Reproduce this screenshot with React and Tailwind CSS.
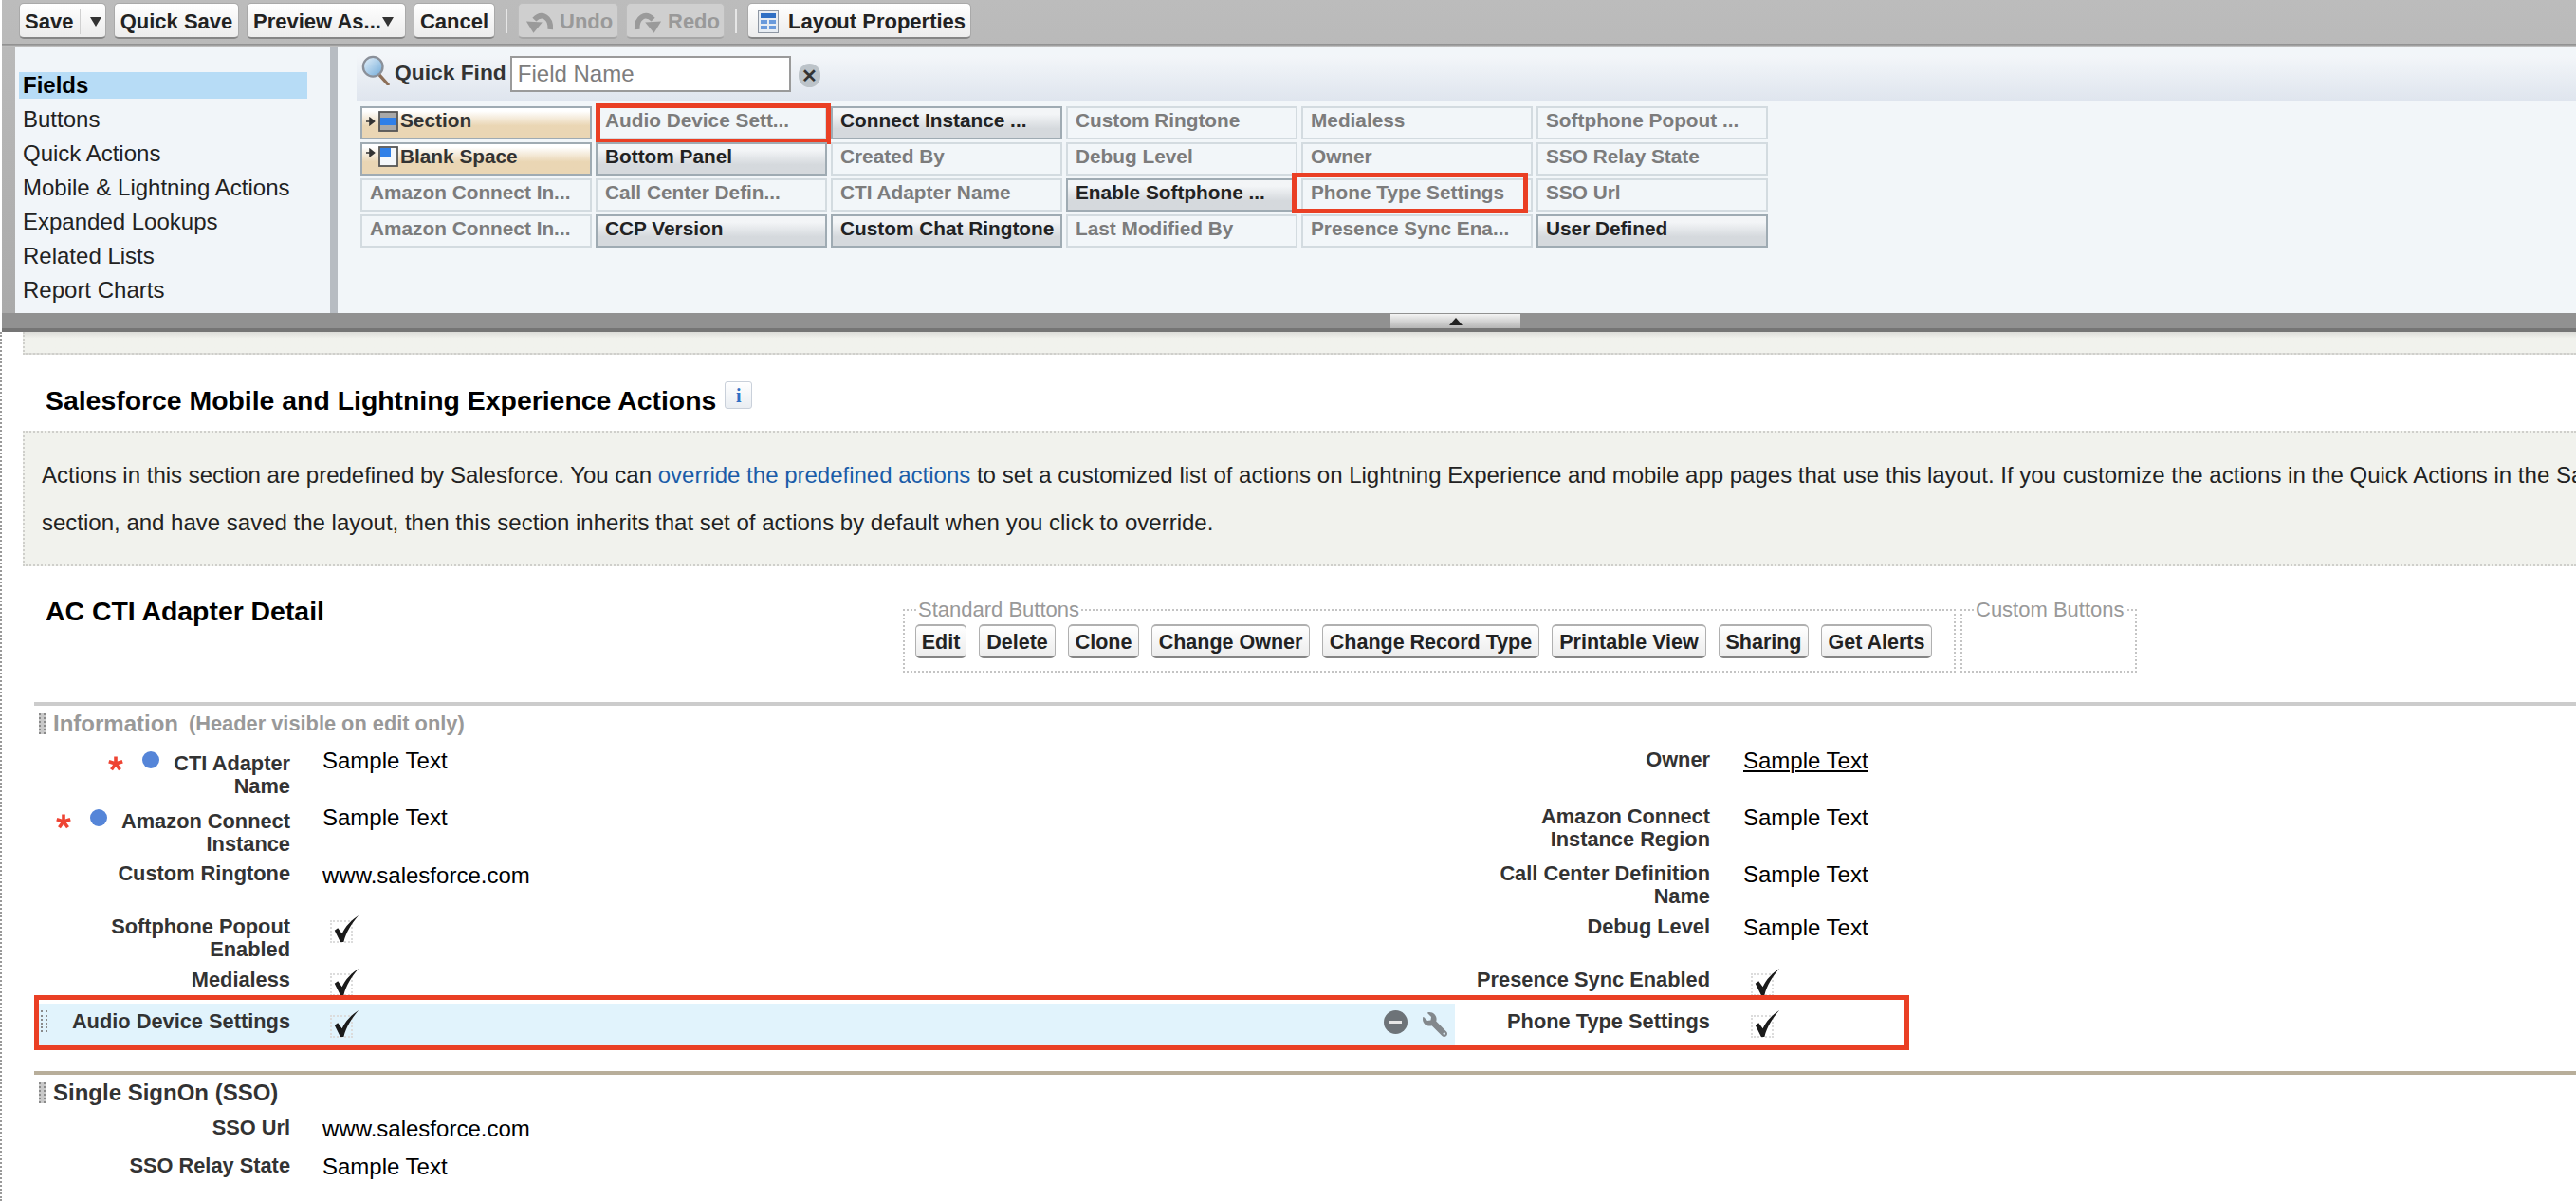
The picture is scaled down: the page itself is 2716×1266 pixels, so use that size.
import React from 'react';
import { FaWrench } from 'react-icons/fa';

const palette = [
  ['Section', 'layout', 'section'],
  ['Audio Device Sett...', 'used', 'red1'],
  ['Connect Instance ...', 'free'],
  ['Custom Ringtone', 'used'],
  ['Medialess', 'used'],
  ['Softphone Popout ...', 'used'],
  ['Blank Space', 'layout', 'blank'],
  ['Bottom Panel', 'free'],
  ['Created By', 'used'],
  ['Debug Level', 'used'],
  ['Owner', 'used'],
  ['SSO Relay State', 'used'],
  ['Amazon Connect In...', 'used'],
  ['Call Center Defin...', 'used'],
  ['CTI Adapter Name', 'used'],
  ['Enable Softphone ...', 'free'],
  ['Phone Type Settings', 'used', 'red2'],
  ['SSO Url', 'used'],
  ['Amazon Connect In...', 'used'],
  ['CCP Version', 'free'],
  ['Custom Chat Ringtone', 'free'],
  ['Last Modified By', 'used'],
  ['Presence Sync Ena...', 'used'],
  ['User Defined', 'free'],
];

const navItems = ['Buttons', 'Quick Actions', 'Mobile & Lightning Actions', 'Expanded Lookups', 'Related Lists', 'Report Charts'];

const stdButtons = [
  ['Edit', 'w-[54px]'],
  ['Delete', 'w-[81px]'],
  ['Clone', 'w-[75px]'],
  ['Change Owner', 'w-[167px]'],
  ['Change Record Type', 'w-[229px]'],
  ['Printable View', 'w-[163px]'],
  ['Sharing', 'w-[95px]'],
  ['Get Alerts', 'w-[117px]'],
];

function Caret({ className }) {
  return <span className={`block shrink-0 w-0 h-0 border-x-[6px] border-x-transparent border-t-[10px] border-t-[#333] ${className}`} />;
}

function ToolButton({ className, children, disabled }) {
  return (
    <div
      className={`h-[38px] flex items-center justify-center rounded-[5px] border border-b-2 pt-[2px] text-[22px] font-bold whitespace-nowrap ${
        disabled
          ? 'bg-[#cfcfcf] border-[#bdbdbd] border-b-[#a6a6a6] text-[#999]'
          : 'bg-gradient-to-b from-white to-[#ececec] border-[#a9a9a9] border-b-[#858585] text-[#222]'
      } ${className}`}
    >
      {children}
    </div>
  );
}

function UndoIcon({ className }) {
  return (
    <svg viewBox="0 0 32 28" className={`w-[30px] h-[27px] shrink-0 ${className}`}>
      <path d="M28 23 C29 10 19 3 10 12" fill="none" stroke="#9a9a9a" strokeWidth="6" />
      <polygon points="1,14 19,15 9,27" fill="#9a9a9a" />
    </svg>
  );
}

function LayoutIcon() {
  return (
    <svg viewBox="0 0 22 24" className="w-[22px] h-[24px] shrink-0">
      <rect x="0.5" y="0.5" width="21" height="23" fill="#e8edf3" stroke="#8e97a3" />
      <rect x="3" y="3" width="16" height="5" fill="#2f6fc4" />
      <rect x="3" y="10" width="7" height="4" fill="#6b9bdc" />
      <rect x="12" y="10" width="7" height="4" fill="#6b9bdc" />
      <rect x="3" y="16" width="7" height="4" fill="#6b9bdc" />
      <rect x="12" y="16" width="7" height="4" fill="#6b9bdc" />
    </svg>
  );
}

function SearchIcon() {
  return (
    <svg viewBox="0 0 32 34" className="w-[30px] h-[32px] shrink-0">
      <defs>
        <linearGradient id="glass" x1="0" y1="0" x2="1" y2="1">
          <stop offset="0" stopColor="#e8f3fb" />
          <stop offset="1" stopColor="#6fa9d8" />
        </linearGradient>
      </defs>
      <line x1="20" y1="22" x2="30" y2="33" stroke="#8d6f58" strokeWidth="3.5" strokeLinecap="round" />
      <circle cx="13" cy="13" r="11" fill="url(#glass)" stroke="#8a9099" strokeWidth="2.5" />
    </svg>
  );
}

function DragArrow({ className }) {
  return (
    <svg viewBox="0 0 10 10" className={`w-[10px] h-[10px] shrink-0 ${className}`}>
      <path d="M0 5 H6 M4 1.5 L8.5 5 L4 8.5 Z" stroke="#333" strokeWidth="1.6" fill="#333" />
    </svg>
  );
}

function SectionIcon() {
  return (
    <svg viewBox="0 0 21 22" className="w-[21px] h-[22px] shrink-0">
      <rect x="1" y="1" width="19" height="20" fill="#a8a8a8" stroke="#555" strokeWidth="1.8" />
      <rect x="2" y="7" width="17" height="8" fill="#2f7fe8" />
    </svg>
  );
}

function BlankIcon() {
  return (
    <svg viewBox="0 0 21 22" className="w-[21px] h-[22px] shrink-0">
      <rect x="1" y="1" width="19" height="20" fill="#f4f7fb" stroke="#555" strokeWidth="1.8" />
      <rect x="2" y="2" width="11" height="10" fill="#2f7fe8" />
    </svg>
  );
}

function PaletteItem({ label, kind, mark }) {
  const look = {
    layout: 'border-[#9fabb3] bg-gradient-to-b from-white from-10% to-[#ead6b4] to-60% text-[#333] font-bold',
    free: 'border-[#9fabb3] bg-gradient-to-b from-[#f3f5f7] from-20% to-[#d5d9dd] to-70% text-[#222] font-bold',
    used: 'border-[#d3dbe0] bg-[#f2f6f9] text-[#7c7c7c] font-bold',
  }[kind];
  return (
    <div className={`relative h-[35px] border-2 ${look} flex items-start text-[20.8px] leading-[26px] whitespace-nowrap ${mark === 'section' || mark === 'blank' ? 'pl-[4px]' : 'pl-[8px]'}`}>
      {mark === 'section' && (
        <span className="flex items-center mr-[2px] mt-[3px]"><DragArrow className="mr-[3px]" /><SectionIcon /></span>
      )}
      {mark === 'blank' && (
        <span className="flex items-start mr-[2px] mt-[2px]"><DragArrow className="mr-[3px] mt-[2px]" /><BlankIcon /></span>
      )}
      {label}
      {mark === 'red1' && <span className="absolute -top-[5px] -left-[2px] w-[248px] h-[43px] border-[5px] border-[#ea3f24]" />}
      {mark === 'red2' && <span className="absolute -top-[8px] -left-[12px] w-[249px] h-[43px] border-[5px] border-[#ea3f24]" />}
    </div>
  );
}

function Grip({ className }) {
  return <span className={`block w-[7px] border-x-2 border-dotted border-[#8a8a8a] bg-[#c9c9c9] ${className}`} />;
}

function Check() {
  return (
    <span className="relative block w-[24px] h-[24px] ml-[8px] mt-[5px] border-2 border-dotted border-[#dcdcdc]">
      <svg viewBox="0 0 30 32" className="absolute -top-[7px] left-[1px] w-[28px] h-[28px] overflow-visible">
        <path d="M1 18 L5 15 L10 22 C14 13 21 6 30 0 C22 9 15 20 12 32 L8 32 Z" fill="#1a1a1a" />
      </svg>
    </span>
  );
}

function Required() {
  return (
    <>
      <svg viewBox="0 0 16 16" className="inline-block w-[16px] h-[16px] mr-[20px] align-[-1px]">
        <g stroke="#ee4433" strokeWidth="3.6">
          <line x1="8" y1="8" x2="8" y2="0.5" />
          <line x1="8" y1="8" x2="15.2" y2="5.7" />
          <line x1="8" y1="8" x2="12.5" y2="14.2" />
          <line x1="8" y1="8" x2="3.5" y2="14.2" />
          <line x1="8" y1="8" x2="0.8" y2="5.7" />
        </g>
      </svg>
      <span className="inline-block w-[18px] h-[18px] mr-[15px] rounded-full bg-[#5585d8] align-[2px]" />
    </>
  );
}

function Label({ className, children }) {
  return <div className={`text-right text-[21.8px] leading-[24px] font-bold text-[#333] ${className}`}>{children}</div>;
}

function Value({ children, className }) {
  return <div className={`text-[24px] leading-[24px] pt-[1px] text-black whitespace-nowrap ${className}`}>{children}</div>;
}

function Row({ height, left, right, active }) {
  return (
    <div className={`flex items-start ${height}`}>
      <div className={`flex items-start w-[1498px] ${active ? 'h-[45px] bg-[#e1f3fc] pt-[7px] relative' : ''}`}>
        {active && <Grip className="absolute left-[7px] top-[7px] h-[23px] w-[4px] border-x-0 border-l-2 bg-transparent" />}
        <Label className="w-[270px]">{left[0]}</Label>
        <div className="ml-[34px]">{left[1]}</div>
        {active && (
          <div className="absolute left-[1423px] top-[7px] flex items-start">
            <span className="w-[25px] h-[25px] rounded-full bg-[#6d7378] flex items-center justify-center">
              <span className="w-[13px] h-[3px] bg-[#e6e6e6]" />
            </span>
            <FaWrench className="ml-[16px] mt-[2px] w-[26px] h-[26px] text-[#83888c] -scale-x-100" />
          </div>
        )}
      </div>
      <div className={`flex items-start ${active ? 'pt-[7px]' : ''}`}>
        <Label className="w-[269px]">{right[0]}</Label>
        <div className="ml-[35px]">{right[1]}</div>
      </div>
    </div>
  );
}

function SectionHead({ lineColor, height, title, note, dim }) {
  return (
    <div className={`${height}`}>
      <div className={`h-[4px] ${lineColor}`} />
      <div className={`flex items-center mt-[8px] pl-[5px] h-[22px] ${dim ? 'text-[#999]' : 'text-[#333]'}`}>
        <Grip className="h-[22px]" />
        <span className="ml-[8px] text-[24px] leading-[22px] font-bold whitespace-nowrap">{title}</span>
        {note && <span className="ml-[11px] text-[21.8px] leading-[22px] font-bold whitespace-nowrap">{note}</span>}
      </div>
    </div>
  );
}

export default function App() {
  return (
    <div className="w-[2716px] h-[1266px] overflow-hidden bg-white font-['Liberation_Sans',Arial,sans-serif]">
      {/* floating layout editor palette */}
      <div className="h-[350px] ml-[2px] flex flex-col bg-gradient-to-b from-[#bcbcbc] to-[#a9a9a9]">
        <div className="h-[46px] shrink-0 flex items-start gap-[8px] pl-[18px] pt-[3px]">
          <ToolButton className="w-[92px] justify-start pl-[5px]">
            Save
            <span className="ml-[7px] mr-[10px] w-px h-[26px] bg-[#d0d0d0]" />
            <Caret />
          </ToolButton>
          <ToolButton className="w-[132px]">Quick Save</ToolButton>
          <ToolButton className="w-[168px] justify-start pl-[6px]">
            Preview As...
            <Caret className="ml-[1px]" />
          </ToolButton>
          <ToolButton className="w-[86px]">Cancel</ToolButton>
          <span className="w-[2px] h-[26px] mx-[3px] mt-[6px] bg-[#e6e6e6]" />
          <ToolButton disabled className="w-[106px] justify-start pl-[7px]">
            <UndoIcon className="mr-[6px]" />Undo
          </ToolButton>
          <ToolButton disabled className="w-[104px] justify-start pl-[7px]">
            <UndoIcon className="mr-[6px] -scale-x-100" />Redo
          </ToolButton>
          <span className="w-[2px] h-[26px] mx-[3px] mt-[6px] bg-[#e6e6e6]" />
          <ToolButton className="w-[236px] justify-start pl-[10px]">
            <LayoutIcon />
            <span className="ml-[10px]">Layout Properties</span>
          </ToolButton>
        </div>

        <div className="h-[4px] shrink-0 bg-gradient-to-b from-[#8b8b8b] to-[#c5c5c5]" />

        <div className="h-[280px] shrink-0 flex pl-[14px]">
          <div className="w-[332px] shrink-0 bg-[#f1f5f9] pl-[4px] pt-[22px] text-[24px] text-[#222]">
            <div className="h-[28px] my-[4px] w-[304px] bg-[#b7dcf6] pl-[4px] leading-[28px] font-bold text-black">Fields</div>
            {navItems.map((item) => (
              <div key={item} className="h-[36px] pl-[4px] leading-[36px] whitespace-nowrap">{item}</div>
            ))}
          </div>
          <div className="w-[8px] shrink-0 bg-[#b7bcc2]" />
          <div className="flex-1 bg-[#f2f6f9] pl-[20px] pt-[8px]">
            <div className="h-[48px] flex items-start pl-[5px] bg-gradient-to-b from-[#f3f6f9] to-[#dfe5ee]">
              <SearchIcon />
              <span className="ml-[5px] mt-[5px] text-[22.8px] leading-[26px] font-bold text-[#333] whitespace-nowrap">Quick Find</span>
              <input
                placeholder="Field Name"
                readOnly
                className="ml-[4px] mt-[1px] w-[296px] h-[38px] px-[6px] border-2 border-[#9a9a9a] bg-white text-[24px] outline-none placeholder:text-[#7d7d7d]"
              />
              <span className="ml-[8px] mt-[9px] w-[23px] h-[25px] rounded-full bg-[#bcc3c9] flex items-center justify-center text-[20px] font-bold leading-none text-[#333]">✕</span>
            </div>
            <div className="mt-[6px] ml-[4px] grid grid-cols-[repeat(6,244px)] gap-x-[4px] gap-y-[3px]">
              {palette.map(([label, kind, mark], i) => (
                <PaletteItem key={i} label={label} kind={kind} mark={mark} />
              ))}
            </div>
          </div>
        </div>

        <div className="h-[16px] shrink-0 bg-[#919191] pl-[1464px]">
          <div className="w-[137px] h-[15px] mt-px flex items-center justify-center bg-gradient-to-b from-[#f4f4f4] to-[#b5b5b5]">
            <span className="w-0 h-0 border-x-[7px] border-x-transparent border-b-[8px] border-b-[#222]" />
          </div>
        </div>
        <div className="h-[4px] shrink-0 bg-[#757575]" />
      </div>

      {/* page layout canvas */}
      <div className="h-[916px] border-l-2 border-dotted border-[#999]">
        <div className="ml-[22px] h-[24px] bg-gradient-to-b from-[#dcdcd8] from-0% to-[#f1f2ed] to-30% border-l-2 border-b-2 border-dotted border-[#cfcfcb]" />

        <div className="h-[80px] pl-[46px] pt-[30px] flex items-start">
          <h2 className="text-[28.4px] leading-[36px] font-bold text-black whitespace-nowrap">Salesforce Mobile and Lightning Experience Actions</h2>
          <span className="ml-[9px] -mt-[2px] w-[29px] h-[29px] rounded-[3px] border border-[#c9d0da] bg-gradient-to-b from-white to-[#e9edf2] flex items-center justify-center font-['Liberation_Serif',serif] text-[20px] font-bold text-[#2f6fc4]">i</span>
        </div>

        <div className="ml-[22px] h-[143px] pl-[18px] pt-[20px] bg-[#f1f2ed] border-2 border-r-0 border-dotted border-[#cfcfcb] text-[24px] leading-[50px] text-[#222] whitespace-nowrap">
          <p>Actions in this section are predefined by Salesforce. You can <span className="text-[#1a5ca8]">override the predefined actions</span> to set a customized list of actions on Lightning Experience and mobile app pages that use this layout. If you customize the actions in the Quick Actions in the Salesforce Classic Publisher</p>
          <p>section, and have saved the layout, then this section inherits that set of actions by default when you click to override.</p>
        </div>

        <div className="h-[143px] flex items-start pl-[46px]">
          <h2 className="w-[904px] pt-[29px] text-[28.4px] leading-[36px] font-bold text-black whitespace-nowrap">AC CTI Adapter Detail</h2>
          <fieldset className="mt-[33px] w-[1110px] h-[79px] border-2 border-dotted border-[#c4c4c4] pl-[11px]">
            <legend className="ml-[1px] px-[2px] text-[22px] leading-[26px] text-[#999]">Standard Buttons</legend>
            <div className="flex gap-[13px] pt-[2px]">
              {stdButtons.map(([label, width]) => (
                <div key={label} className={`${width} h-[36px] flex items-center justify-center rounded-[5px] border border-t-2 border-b-2 pt-[2px] border-[#b0b0b0] border-b-[#858585] bg-gradient-to-b from-white to-[#ececec] text-[21.5px] font-bold text-[#222] whitespace-nowrap`}>
                  {label}
                </div>
              ))}
            </div>
          </fieldset>
          <fieldset className="mt-[33px] ml-[5px] w-[186px] h-[79px] border-2 border-dotted border-[#c4c4c4]">
            <legend className="ml-[12px] px-[2px] text-[22px] leading-[26px] text-[#999]">Custom Buttons</legend>
          </fieldset>
        </div>

        <div className="ml-[34px]">
          <SectionHead lineColor="bg-[#cccccc]" height="h-[49px]" title="Information" note="(Header visible on edit only)" dim />
          <Row
            height="h-[60px]"
            left={[<span className="relative top-[3px] block"><Required />CTI Adapter<br />Name</span>, <Value>Sample Text</Value>]}
            right={['Owner', <Value className="underline">Sample Text</Value>]}
          />
          <Row
            height="h-[60px]"
            left={[<span className="relative top-[4px] block whitespace-nowrap"><Required />Amazon Connect<br />Instance</span>, <Value>Sample Text</Value>]}
            right={[<>Amazon Connect<br />Instance Region</>, <Value>Sample Text</Value>]}
          />
          <Row
            height="h-[56px]"
            left={['Custom Ringtone', <Value className="mt-[1px]">www.salesforce.com</Value>]}
            right={[<>Call Center Definition<br />Name</>, <Value>Sample Text</Value>]}
          />
          <Row
            height="h-[56px]"
            left={[<>Softphone Popout<br />Enabled</>, <Check />]}
            right={['Debug Level', <Value>Sample Text</Value>]}
          />
          <Row
            height="h-[37px]"
            left={['Medialess', <Check />]}
            right={['Presence Sync Enabled', <Check />]}
          />
          <div className="relative">
            <Row
              height="h-[45px]"
              active
              left={['Audio Device Settings', <Check />]}
              right={['Phone Type Settings', <Check />]}
            />
            <span className="absolute -top-[9px] left-0 w-[1977px] h-[58px] border-[5px] border-[#ea3f24]" />
          </div>

          <div className="mt-[26px]">
            <SectionHead lineColor="bg-[#b8ae9a]" height="h-[48px]" title="Single SignOn (SSO)" />
          </div>
          <Row height="h-[40px]" left={['SSO Url', <Value>www.salesforce.com</Value>]} right={[null, null]} />
          <Row height="h-[40px]" left={['SSO Relay State', <Value>Sample Text</Value>]} right={[null, null]} />
        </div>
      </div>
    </div>
  );
}
